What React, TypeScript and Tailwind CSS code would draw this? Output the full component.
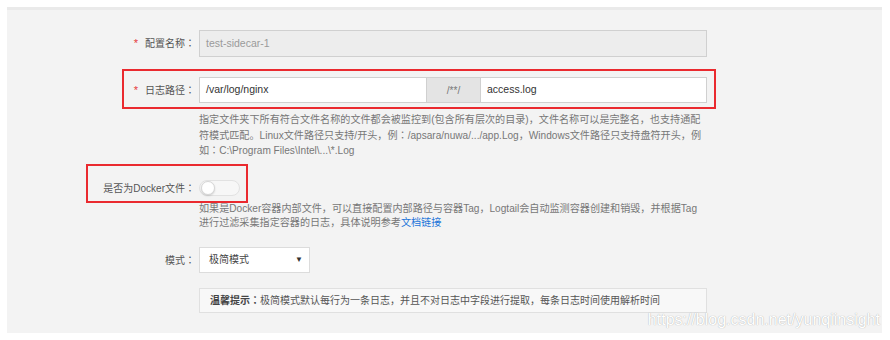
import React from "react";

const Req = () => <span className="text-[#e5393a] mr-[7px] text-[11px]">*</span>;
const Colon = () => <span className="font-['Noto_Sans_CJK_TC',sans-serif]">：</span>;

export default function App() {
  return (
    <div className="w-[890px] h-[340px] bg-white pt-[7px] font-['Liberation_Sans','Noto_Sans_CJK_SC',sans-serif] text-[10px] text-[#555]">
      <div className="relative ml-[7px] w-[875px] h-[326px] bg-[#f3f3f3] border-t-[3px] border-[#eaeaea] pt-[20px]">
        {/* Row 1 */}
        <div className="flex items-center h-[27px]">
          <div className="w-[188px] text-right text-[#555]">
            <Req />配置名称<Colon />
          </div>
          <div className="ml-[4px] w-[508px] h-[27px] flex items-center px-[6px] bg-[#ededed] border border-[#d0d0d0] text-[#9a9a9a] text-[10.5px]">
            test-sidecar-1
          </div>
        </div>

        {/* Row 2 */}
        <div className="relative flex items-center h-[26px] mt-[20px]">
          <div className="absolute left-[115px] top-[-8px] w-[594px] h-[40px] border-2 border-[#ea2a2f] pointer-events-none" />
          <div className="w-[188px] text-right text-[#555]">
            <Req />日志路径<Colon />
          </div>
          <div className="ml-[4px] flex h-[26px]">
            <div className="w-[228px] h-full flex items-center px-[6px] bg-white border border-[#d0d0d0] text-[#333] text-[10.5px]">
              /var/log/nginx
            </div>
            <div className="w-[53px] h-full flex items-center justify-center bg-[#e4e4e4] border-y border-[#d0d0d0] text-[#777] text-[10px]">
              /**/
            </div>
            <div className="w-[227px] h-full flex items-center px-[6px] bg-white border border-[#d0d0d0] text-[#333] text-[10.5px]">
              access.log
            </div>
          </div>
        </div>

        {/* Help 1 */}
        <div className="mt-[10px] pl-[192px] leading-[14.5px] text-[10.1px] text-[#777] whitespace-nowrap">
          <div>指定文件夹下所有符合文件名称的文件都会被监控到(包含所有层次的目录)，文件名称可以是完整名，也支持通配</div>
          <div>符模式匹配。Linux文件路径只支持/开头，例<Colon />/apsara/nuwa/.../app.Log，Windows文件路径只支持盘符开头，例</div>
          <div>如<Colon />C:\Program Files\Intel\...\*.Log</div>
        </div>

        {/* Docker row */}
        <div className="relative flex items-center h-[16px] mt-[21px]">
          <div className="absolute left-[79px] top-[-16px] w-[162px] h-[39px] border-2 border-[#ea2a2f] pointer-events-none" />
          <div className="w-[188px] text-right text-[#555]">是否为Docker文件<Colon /></div>
          <div className="ml-[4px] relative w-[41px] h-[16px] rounded-full bg-[#f7f7f7] border border-[#e2e2e2]">
            <div className="absolute left-[1px] top-[0px] w-[14px] h-[14px] rounded-full bg-white border border-[#d6d6d6] shadow-[0_1px_2px_rgba(0,0,0,0.15)]" />
          </div>
        </div>

        {/* Help 2 */}
        <div className="mt-[6px] pl-[192px] leading-[14px] text-[10.1px] text-[#777] whitespace-nowrap">
          <div>如果是Docker容器内部文件，可以直接配置内部路径与容器Tag，Logtail会自动监测容器创建和销毁，并根据Tag</div>
          <div>
            进行过滤采集指定容器的日志，具体说明参考<span className="text-[#1a73d9]">文档链接</span>
          </div>
        </div>

        {/* Mode row */}
        <div className="flex items-center h-[26px] mt-[17px]">
          <div className="w-[188px] text-right text-[#555]">模式<Colon /></div>
          <div className="ml-[4px] w-[111px] h-[26px] flex items-center justify-between pl-[9px] pr-[6px] bg-white border border-[#dcdcdc] text-[#444]">
            <span>极简模式</span>
            <span className="text-[8px] text-[#333]">▼</span>
          </div>
        </div>

        {/* Tip */}
        <div className="ml-[192px] mt-[15px] w-[508px] h-[25px] flex items-center px-[10px] bg-[#f8f8f8] border border-[#e0e0e0] text-[#555] whitespace-nowrap">
          <span className="font-bold text-[#444]">温馨提示<Colon /></span>
          <span>极简模式默认每行为一条日志，并且不对日志中字段进行提取，每条日志时间使用解析时间</span>
        </div>

        {/* Watermark */}
        <div className="absolute right-[2px] bottom-[1px] text-[16px] text-white [text-shadow:0_0_1px_#9a9a9a] whitespace-nowrap">
          https://blog.csdn.net/yunqiinsight
        </div>
      </div>
    </div>
  );
}
